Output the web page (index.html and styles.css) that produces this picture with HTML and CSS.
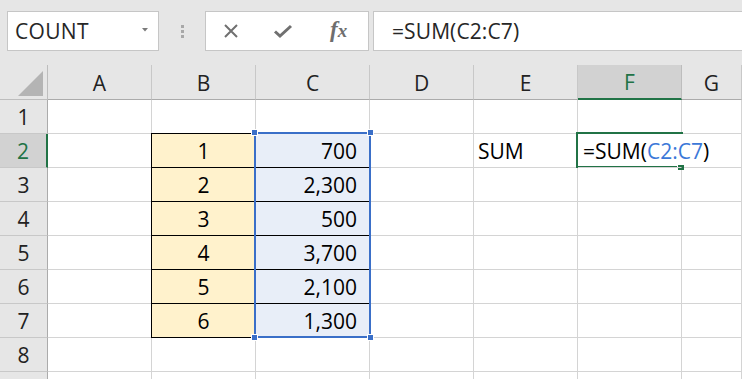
FILE: index.html
```html
<!DOCTYPE html>
<html>
<head>
<meta charset="utf-8">
<link rel="stylesheet" href="styles.css">
</head>
<body>
<div class="app">
  <div class="toolbar">
    <div class="namebox">
      <span class="name">COUNT</span>
      <svg class="caret" width="6" height="4" viewBox="0 0 6 4"><path d="M0 0H6L3 3.5Z" fill="#7a7a7a"/></svg>
    </div>
    <div class="grip"><i></i><i></i><i></i></div>
    <div class="buttons">
      <svg class="btn" width="18" height="18" viewBox="0 0 18 18"><path d="M3 3L15 15M15 3L3 15" stroke="#707070" stroke-width="2" fill="none"/></svg>
      <svg class="btn" width="20" height="18" viewBox="0 0 20 18"><path d="M2 9.5L7 14L18 4" stroke="#707070" stroke-width="3" fill="none"/></svg>
      <span class="fx">f<span class="x">x</span></span>
    </div>
    <div class="formula">=SUM(C2:C7)</div>
  </div>
  <div class="sheet">
    <div class="corner"><span class="tri"></span></div>
    <div class="ch">A</div><div class="ch">B</div><div class="ch">C</div><div class="ch">D</div><div class="ch">E</div><div class="ch active">F</div><div class="ch">G</div>

    <div class="rh">1</div><div class="c"></div><div class="c"></div><div class="c"></div><div class="c"></div><div class="c"></div><div class="c"></div><div class="c"></div>

    <div class="rh active">2</div><div class="c"></div><div class="c b top">1</div><div class="c cc">700</div><div class="c"></div><div class="c txt">SUM</div><div class="c txt f2">=SUM(<span class="ref">C2:C7</span>)</div><div class="c"></div>

    <div class="rh">3</div><div class="c"></div><div class="c b">2</div><div class="c cc">2,300</div><div class="c"></div><div class="c"></div><div class="c"></div><div class="c"></div>

    <div class="rh">4</div><div class="c"></div><div class="c b">3</div><div class="c cc">500</div><div class="c"></div><div class="c"></div><div class="c"></div><div class="c"></div>

    <div class="rh">5</div><div class="c"></div><div class="c b">4</div><div class="c cc">3,700</div><div class="c"></div><div class="c"></div><div class="c"></div><div class="c"></div>

    <div class="rh">6</div><div class="c"></div><div class="c b">5</div><div class="c cc">2,100</div><div class="c"></div><div class="c"></div><div class="c"></div><div class="c"></div>

    <div class="rh">7</div><div class="c"></div><div class="c b">6</div><div class="c cc">1,300</div><div class="c"></div><div class="c"></div><div class="c"></div><div class="c"></div>

    <div class="rh">8</div><div class="c"></div><div class="c"></div><div class="c"></div><div class="c"></div><div class="c"></div><div class="c"></div><div class="c"></div>

    <div class="rh"></div><div class="c"></div><div class="c"></div><div class="c"></div><div class="c"></div><div class="c"></div><div class="c"></div><div class="c"></div>

    <div class="sel">
      <span class="h tl"></span><span class="h tr"></span><span class="h bl"></span><span class="h br"></span>
    </div>
    <div class="cursor"><span class="fill"></span></div>
  </div>
</div>
</body>
</html>
```

FILE: styles.css
```css
* { box-sizing: border-box; }
html, body { margin: 0; padding: 0; }
body {
  width: 742px;
  height: 379px;
  overflow: hidden;
  background: #fff;
  font-family: "Open Sans", "Noto Sans", sans-serif;
  color: #000;
}
.app { width: 742px; height: 379px; overflow: hidden; }

.toolbar {
  height: 65px;
  background: #e6e6e6;
  display: flex;
  align-items: flex-start;
  padding-top: 11px;
  padding-left: 7px;
}
.namebox {
  width: 152px;
  height: 40px;
  background: #fff;
  border: 1px solid #c6c6c6;
  display: flex;
  align-items: center;
  justify-content: space-between;
  padding: 0 10px 0 7px;
  font-size: 21px;
  color: #262626;
}
.name { letter-spacing: 0.3px; }
.caret { margin-bottom: 2px; }
.grip {
  width: 46px;
  height: 40px;
  display: flex;
  flex-direction: column;
  align-items: center;
  justify-content: center;
  gap: 2px;
}
.grip i {
  display: block;
  width: 3px;
  height: 3px;
  background: #a8a8a8;
}
.buttons {
  width: 164px;
  height: 40px;
  background: #fff;
  border: 1px solid #c6c6c6;
  display: flex;
  align-items: center;
  padding-left: 16px;
  gap: 33px;
}
.btn { display: block; }
.fx {
  font-family: "Liberation Serif", "DejaVu Serif", serif;
  font-style: italic;
  font-size: 23px;
  color: #6e6e6e;
  font-weight: bold;
  margin-left: 4px;
  margin-top: -3px;
}
.fx .x { font-size: 19px; }
.formula {
  margin-left: 4px;
  flex: 1;
  height: 40px;
  background: #fff;
  border: 1px solid #c6c6c6;
  border-right: none;
  font-size: 21px;
  letter-spacing: 0.1px;
  color: #262626;
  display: flex;
  align-items: center;
  padding-left: 18px;
}

.sheet {
  position: relative;
  display: grid;
  grid-template-columns: 48px 104px 104px 114px 104px 104px 104px 1fr;
  grid-template-rows: 35px repeat(9, 34px);
  font-size: 21px;
}
.corner {
  background: #e6e6e6;
  border-right: 1px solid #bdbdbd;
  border-bottom: 1px solid #bdbdbd;
  position: relative;
}
.tri {
  position: absolute;
  right: 4px;
  bottom: 3px;
  width: 0;
  height: 0;
  border-left: 25px solid transparent;
  border-bottom: 25px solid #b4b4b4;
}
.ch {
  background: #e6e6e6;
  border-right: 1px solid #c8c8c8;
  border-bottom: 1px solid #ababab;
  display: flex;
  align-items: center;
  justify-content: center;
  color: #222;
  padding-top: 1px;
}
.ch.active {
  background: #d2d2d2;
  color: #217346;
  border-bottom: 2px solid #217346;
  border-right-color: #bdbdbd;
}
.rh {
  background: #e6e6e6;
  border-right: 1px solid #ababab;
  border-bottom: 1px solid #c8c8c8;
  display: flex;
  align-items: center;
  justify-content: center;
  color: #222;
}
.rh.active {
  background: #d2d2d2;
  color: #217346;
  border-right: 2px solid #217346;
}
.c {
  border-right: 1px solid #d4d4d4;
  border-bottom: 1px solid #d4d4d4;
  display: flex;
  align-items: center;
  white-space: nowrap;
}
.b {
  background: #fff2cc;
  justify-content: center;
  border-left: 1px solid #000;
  border-right: 1px solid #000;
  border-bottom: 1px solid #000;
  margin-left: -1px;
}
.b.top { border-top: 1px solid #000; margin-top: -1px; }
.cc {
  background: #e8eef8;
  justify-content: flex-end;
  padding-right: 12px;
  border-bottom: 1px solid #000;
}
.txt { padding-left: 4px; overflow: visible; }
.f2 {
  padding-left: 5px;
  border-right-color: transparent;
  position: relative;
  z-index: 1;
}
.ref { color: #3b78d8; }

.sel {
  position: absolute;
  left: 254px;
  top: 67px;
  width: 117px;
  height: 206px;
  border: 2px solid #3a6fc8;
}
.h {
  position: absolute;
  width: 7px;
  height: 7px;
  background: #3a6fc8;
  border: 1px solid #fff;
}
.tl { left: -5px; top: -5px; }
.tr { right: -5px; top: -5px; }
.bl { left: -5px; bottom: -5px; }
.br { right: -5px; bottom: -5px; }

.cursor {
  position: absolute;
  left: 576px;
  top: 67px;
  width: 107px;
  height: 36px;
  border: 2px solid #217346;
  border-right: none;
}
.fill {
  position: absolute;
  right: -1px;
  bottom: -4px;
  width: 7px;
  height: 6px;
  background: #217346;
  border: 1px solid #fff;
  border-right: none;
  border-bottom: none;
}
```
